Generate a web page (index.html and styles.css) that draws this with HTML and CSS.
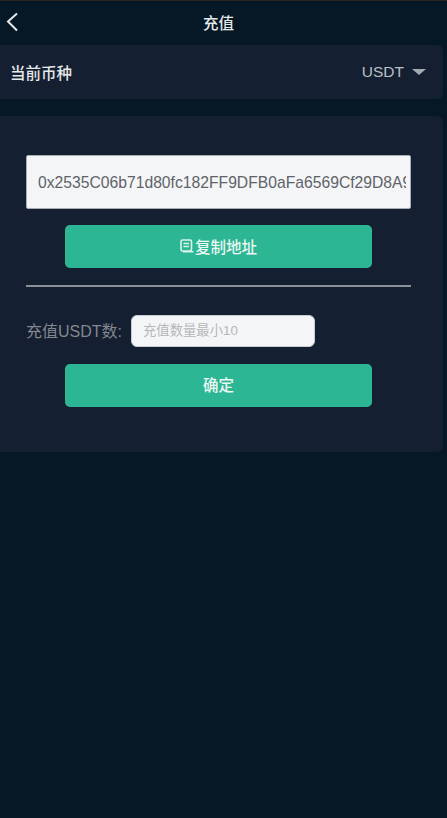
FILE: index.html
```html
<!DOCTYPE html>
<html lang="zh-CN">
<head>
    <meta charset="UTF-8">
    <meta name="viewport" content="width=device-width, initial-scale=1.0">
    <title>充值</title>
    <link rel="stylesheet" href="styles.css">
</head>
<body>
    <header class="top-bar">
        <a class="back" href="#">
            <svg width="16" height="20" viewBox="0 0 16 20" fill="none" stroke="#e6e8ea" stroke-width="2">
                <path d="M13 1.5 L4 9.5 L13 18.5"/>
            </svg>
        </a>
        <h1 class="title">充值</h1>
    </header>
    <section class="coin-row">
        <span class="coin-label">当前币种</span>
        <span class="coin-select">USDT<i class="caret"></i></span>
    </section>
    <section class="panel">
        <input class="address" type="text" readonly value="0x2535C06b71d80fc182FF9DFB0aFa6569Cf29D8A9c1">
        <button class="btn btn-copy">
            <svg class="copy-icon" width="14" height="14" viewBox="0 0 14 14" fill="none" stroke="#d9f2ea" stroke-width="1.6">
                <rect x="1" y="1" width="10.5" height="11" rx="1.5"/>
                <path d="M3.5 4.5 H9 M3.5 7.5 H9 M3 12.8 H13.5"/>
            </svg>复制地址
        </button>
        <hr class="divider">
        <div class="amount-row">
            <label class="amount-label" for="amount">充值USDT数:</label>
            <input class="amount" id="amount" type="text" placeholder="充值数量最小10">
        </div>
        <button class="btn">确定</button>
    </section>
</body>
</html>
```
FILE: styles.css
```css
body {
    margin: 0;
    min-height: 818px;
    background-color: #061825;
    font-family: "Liberation Sans", "Noto Sans CJK SC", sans-serif;
    font-size: 16px;
    color: #e6e8ea;
}

.top-bar {
    display: flex;
    justify-content: center;
    align-items: center;
    position: relative;
    height: 45px;
    padding: 0 10px 2px 0;
    border-top: 1px solid #2a2320;
    box-sizing: border-box;
}

.back {
    position: absolute;
    left: 4px;
    top: 11px;
    line-height: 0;
}

.title {
    margin: 0;
    font-size: 15.5px;
    font-weight: 500;
    color: #e6e8ea;
}

.coin-row {
    display: flex;
    justify-content: space-between;
    align-items: center;
    height: 54px;
    margin-right: 4px;
    padding: 0 17px 0 10px;
    background-color: #141f31;
    border-radius: 0 6px 6px 0;
}

.coin-label {
    font-size: 15.5px;
    font-weight: 500;
    color: #e6e8ea;
}

.coin-select {
    display: flex;
    align-items: center;
    font-size: 15.5px;
    color: #bcc0c6;
}

.caret {
    width: 0;
    height: 0;
    margin-left: 8px;
    border-left: 7px solid transparent;
    border-right: 7px solid transparent;
    border-top: 6px solid #a3a9b2;
}

.panel {
    display: flex;
    flex-direction: column;
    height: 336px;
    margin-top: 17px;
    margin-right: 4px;
    padding: 39px 0 0 26px;
    box-sizing: border-box;
    background-color: #141f31;
    border-radius: 0 6px 6px 0;
}

.address {
    width: 385px;
    height: 54px;
    padding: 2px 4px 0 11px;
    box-sizing: border-box;
    border: 1px solid #a8adb5;
    border-radius: 2px;
    background-color: #f4f5f7;
    font-family: inherit;
    font-size: 15.7px;
    color: #5f6368;
    outline: none;
}

.btn {
    display: flex;
    justify-content: center;
    align-items: center;
    width: 307px;
    height: 43px;
    margin-left: 39px;
    margin-top: 17px;
    padding: 0 0 3px;
    border: none;
    border-radius: 5px;
    background-color: #2db694;
    font-family: inherit;
    font-size: 15.5px;
    font-weight: 500;
    color: #eaf7f3;
    cursor: pointer;
}

.btn-copy {
    margin-top: 16px;
    padding-bottom: 1px;
}

.copy-icon {
    margin-right: 1px;
}

.divider {
    width: 385px;
    height: 2px;
    margin: 17px 0 0;
    border: none;
    background-color: #8b8f96;
}

.amount-row {
    display: flex;
    align-items: center;
    margin-top: 28px;
}

.amount-label {
    width: 105px;
    padding-bottom: 2px;
    font-size: 16px;
    color: #83878e;
}

.amount {
    width: 184px;
    height: 32px;
    padding: 0 11px 2px;
    box-sizing: border-box;
    border: 1px solid #c9ccd2;
    border-radius: 6px;
    background-color: #f4f5f7;
    font-family: inherit;
    font-size: 13.33px;
    outline: none;
}

.amount::placeholder {
    color: #b5b7bb;
}
```
